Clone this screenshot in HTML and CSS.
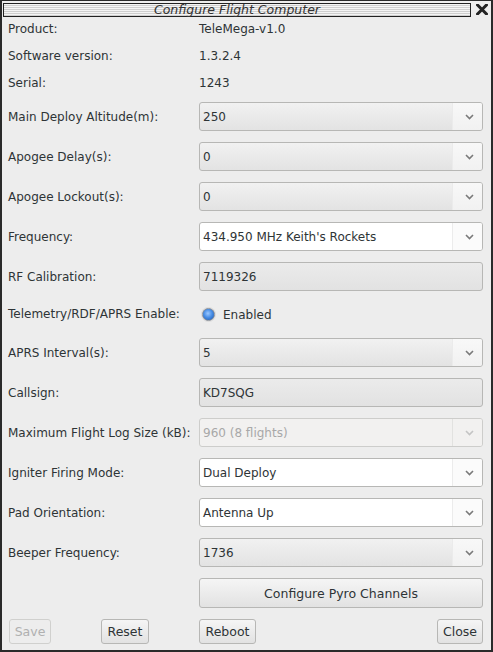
FILE: index.html
```html
<!DOCTYPE html>
<html>
<head>
<meta charset="utf-8">
<link rel="stylesheet" href="styles.css">
</head>
<body>
<div class="window">
  <div class="titlebar">
    <div class="title">Configure Flight Computer</div>
    <div class="close">
      <svg width="12" height="11" viewBox="0 0 12 11"><path d="M1.5 1 L10.5 10 M10.5 1 L1.5 10" stroke="#222" stroke-width="3" stroke-linecap="square"/></svg>
    </div>
  </div>
  <div class="form">
    <div class="label trow">Product:</div><div class="value trow">TeleMega-v1.0</div>
    <div class="label trow">Software version:</div><div class="value trow">1.3.2.4</div>
    <div class="label trow">Serial:</div><div class="value trow">1243</div>

    <div class="label">Main Deploy Altitude(m):</div>
    <div class="combo"><span class="ctext">250</span><span class="cbtn"><svg width="9" height="6" viewBox="0 0 9 6"><path d="M1 1 L4.5 4.5 L8 1" fill="none" stroke="#7a7a7a" stroke-width="1.6"/></svg></span></div>

    <div class="label">Apogee Delay(s):</div>
    <div class="combo"><span class="ctext">0</span><span class="cbtn"><svg width="9" height="6" viewBox="0 0 9 6"><path d="M1 1 L4.5 4.5 L8 1" fill="none" stroke="#7a7a7a" stroke-width="1.6"/></svg></span></div>

    <div class="label">Apogee Lockout(s):</div>
    <div class="combo"><span class="ctext">0</span><span class="cbtn"><svg width="9" height="6" viewBox="0 0 9 6"><path d="M1 1 L4.5 4.5 L8 1" fill="none" stroke="#7a7a7a" stroke-width="1.6"/></svg></span></div>

    <div class="label">Frequency:</div>
    <div class="combo entry"><span class="ctext">434.950 MHz Keith's Rockets</span><span class="cbtn"><svg width="9" height="6" viewBox="0 0 9 6"><path d="M1 1 L4.5 4.5 L8 1" fill="none" stroke="#7a7a7a" stroke-width="1.6"/></svg></span></div>

    <div class="label">RF Calibration:</div>
    <div class="combo field"><span class="ctext">7119326</span></div>

    <div class="label radiorow">Telemetry/RDF/APRS Enable:</div>
    <div class="radio radiorow"><span class="dot"></span><span>Enabled</span></div>

    <div class="label">APRS Interval(s):</div>
    <div class="combo"><span class="ctext">5</span><span class="cbtn"><svg width="9" height="6" viewBox="0 0 9 6"><path d="M1 1 L4.5 4.5 L8 1" fill="none" stroke="#7a7a7a" stroke-width="1.6"/></svg></span></div>

    <div class="label">Callsign:</div>
    <div class="combo field"><span class="ctext">KD7SQG</span></div>

    <div class="label">Maximum Flight Log Size (kB):</div>
    <div class="combo disabled"><span class="ctext">960 (8 flights)</span><span class="cbtn"><svg width="9" height="6" viewBox="0 0 9 6"><path d="M1 1 L4.5 4.5 L8 1" fill="none" stroke="#c4c4c4" stroke-width="1.6"/></svg></span></div>

    <div class="label">Igniter Firing Mode:</div>
    <div class="combo entry"><span class="ctext">Dual Deploy</span><span class="cbtn"><svg width="9" height="6" viewBox="0 0 9 6"><path d="M1 1 L4.5 4.5 L8 1" fill="none" stroke="#7a7a7a" stroke-width="1.6"/></svg></span></div>

    <div class="label">Pad Orientation:</div>
    <div class="combo entry"><span class="ctext">Antenna Up</span><span class="cbtn"><svg width="9" height="6" viewBox="0 0 9 6"><path d="M1 1 L4.5 4.5 L8 1" fill="none" stroke="#7a7a7a" stroke-width="1.6"/></svg></span></div>

    <div class="label">Beeper Frequency:</div>
    <div class="combo"><span class="ctext">1736</span><span class="cbtn"><svg width="9" height="6" viewBox="0 0 9 6"><path d="M1 1 L4.5 4.5 L8 1" fill="none" stroke="#7a7a7a" stroke-width="1.6"/></svg></span></div>

    <div></div>
    <button class="btn pyro">Configure Pyro Channels</button>
  </div>
  <div class="actions">
    <button class="btn small save" disabled>Save</button>
    <button class="btn small reset">Reset</button>
    <button class="btn small reboot">Reboot</button>
    <button class="btn small close-btn">Close</button>
  </div>
</div>
</body>
</html>
```

FILE: styles.css
```css
html, body {
  margin: 0;
  padding: 0;
  background: #ededed;
}
body {
  font-family: "DejaVu Sans", sans-serif;
  font-size: 12px;
  color: #2e3436;
}
.window {
  width: 493px;
  height: 652px;
  box-sizing: border-box;
  border: 2px solid #2a2a2a;
  border-top: 1px solid #2a2a2a;
  background: #ededed;
  position: relative;
}
.titlebar {
  display: flex;
  align-items: center;
  height: 15px;
  padding: 1px 0 0 1px;
}
.title {
  width: 466px;
  height: 12px;
  border: 1px solid #222;
  background: repeating-linear-gradient(to bottom, #f4f4f4 0, #f4f4f4 1px, #cfcfcf 1px, #cfcfcf 2px);
  font-style: italic;
  font-size: 12.5px;
  line-height: 12px;
  text-align: center;
  color: #333;
}
.close {
  margin-left: 5px;
  width: 12px;
  height: 11px;
  display: flex;
}
.form {
  display: grid;
  grid-template-columns: 191px 284px;
  row-gap: 11px;
  padding: 4px 0 0 6px;
  align-items: center;
}
.trow {
  height: 16px;
  line-height: 17px;
}
.label {
  white-space: nowrap;
}
.radiorow {
  height: 25px;
}
.label.radiorow {
  line-height: 25px;
}
.radio {
  display: flex;
  align-items: center;
  gap: 8px;
  padding-left: 3px;
}
.dot {
  width: 11px;
  height: 11px;
  border-radius: 50%;
  border: 1px solid #8a9099;
  background: radial-gradient(circle at 45% 40%, #9cc8ff 0, #4a8fe6 45%, #2f6fc6 75%);
  box-shadow: 0 0 0 1px #dcdcdc;
}
.combo {
  display: flex;
  height: 29px;
  box-sizing: border-box;
  border: 1px solid #b7b7b5;
  border-radius: 3px;
  background: linear-gradient(to bottom, #f1f1f1, #e3e3e3);
  overflow: hidden;
}
.ctext {
  flex: 1;
  padding-left: 3px;
  line-height: 28px;
  white-space: nowrap;
}
.cbtn {
  width: 30px;
  border-left: 1px solid #ebebeb;
  background: linear-gradient(to bottom, #f8f8f8, #f1f1f1);
  display: flex;
  align-items: center;
  justify-content: center;
  padding-left: 3px;
  box-sizing: border-box;
}
.combo.entry {
  background: #ffffff;
}
.combo.entry .cbtn {
  background: #fbfbfb;
  border-left-color: #ececec;
}
.combo.field {
  background: linear-gradient(to bottom, #ebebeb, #e2e2e2);
}
.combo.disabled {
  background: #f2f1f0;
  border-color: #cdcdcb;
  color: #a8a8a8;
}
.combo.disabled .cbtn {
  background: #f2f1f0;
  border-left-color: #e2e2e0;
}
.btn {
  font-family: "DejaVu Sans", sans-serif;
  font-size: 12.5px;
  color: #2e3436;
  border: 1px solid #b7b7b5;
  border-radius: 3px;
  background: linear-gradient(to bottom, #f5f5f5, #e2e2e2);
  padding: 0;
  margin: 0;
}
.pyro {
  height: 30px;
}
.actions {
  display: flex;
  align-items: center;
  padding: 11px 8px 0 7px;
}
.small {
  height: 25px;
}
.save {
  width: 42px;
  color: #b0b0b0;
  border-color: #d0d0ce;
  background: #ededed;
}
.reset {
  width: 48px;
  margin-left: 50px;
}
.reboot {
  width: 57px;
  margin-left: 50px;
}
.close-btn {
  width: 46px;
  margin-left: auto;
}
```
